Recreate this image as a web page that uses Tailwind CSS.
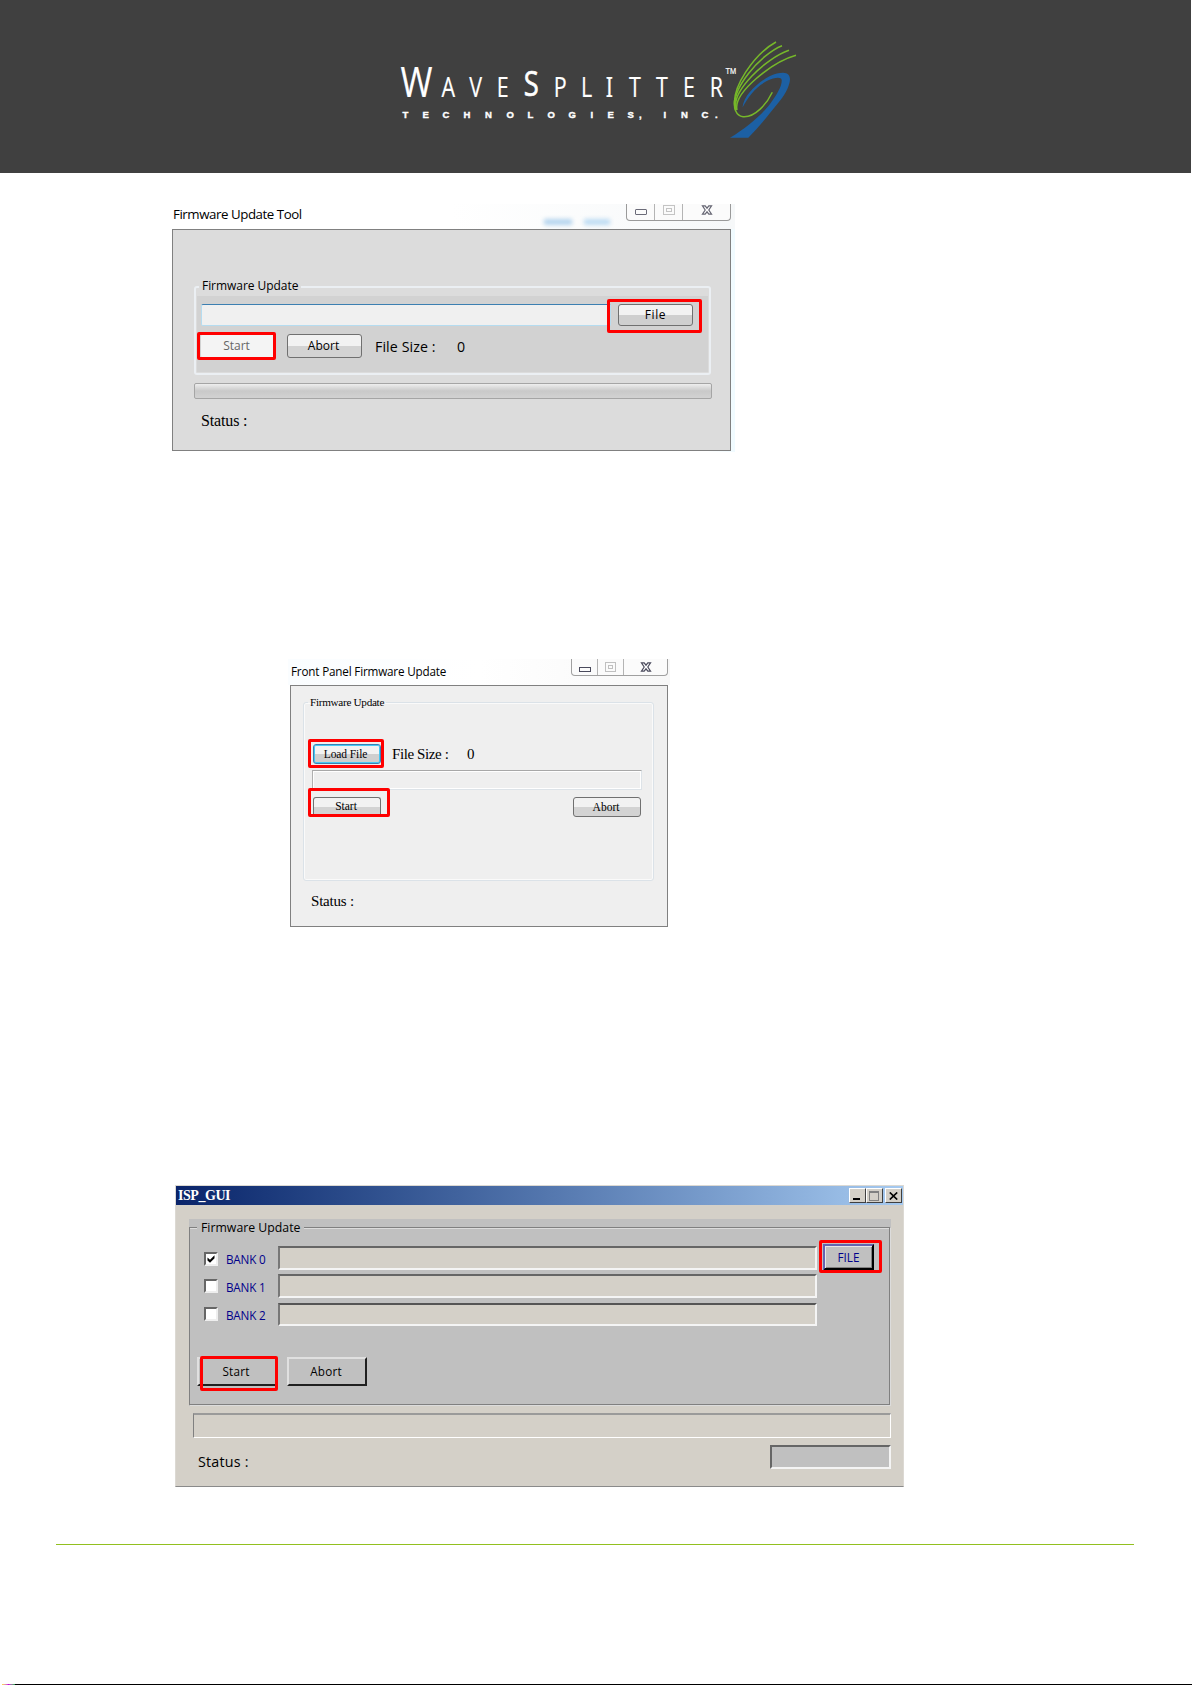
<!DOCTYPE html>
<html lang="en">
  <head>
    <meta charset="utf-8" />
    <title>WaveSplitter Technologies - Firmware Update</title>
    <script src="https://cdn.jsdelivr.net/npm/@tailwindcss/browser@4"></script>
  </head>
  <body class="flex h-[1685px] w-[1192px] flex-col overflow-hidden bg-white font-['Open_Sans','Noto_Sans',sans-serif] text-black">
    <header class="h-[173px] w-[1191px] shrink-0 bg-[#404040] pl-[390px] pt-[30px]">
      <svg class="block" width="420" height="140" viewBox="0 0 420 140" role="img" aria-label="WaveSplitter Technologies, Inc.">
        <g fill="#fff" stroke="#fff" stroke-width=".2" font-family="Open Sans, Noto Sans, sans-serif" transform="scale(.78 1)">
          <text x="13.500" y="67" font-size="42" textLength="41" lengthAdjust="spacingAndGlyphs">W</text>
          <text x="66 101.5 137" y="67" font-size="27.5">AVE</text>
          <text x="171.5" y="66.500" font-size="35" stroke-width=".7">S</text>
          <text x="210 245" y="67" font-size="27.5">PL</text>
          <text x="276.500" y="67" font-size="27.5" font-family="Noto Sans, sans-serif">I</text>
          <text x="306.5 341 375.5 410" y="67" font-size="27.5">TTER</text>
          <text x="430" y="44" font-size="9.5" font-family="Liberation Sans, sans-serif">TM</text>
        </g>
        <text
          x="12.5 32.5 52.5 73.5 95 116.5 137.5 157.5 178.5 200.5 217.5 237.5 249 273.5 291 311.5 325"
          y="87.5" fill="#fff" stroke="#fff" stroke-width=".4" font-size="9.5" font-weight="700"
          font-family="Liberation Sans, sans-serif">TECHNOLOGIES,INC.</text>
        <path fill="#1c60a4" d="M340 107.700h18.300C366 100 373 92 380 83c9-11 16-19 18.500-27 3-8 1.500-13-5.500-13.300-4 0-8 1-13 3.300-13 7-26 19-27.500 31.500C359 65 369 53 383 48.500c5-1.500 8.500-1 8.700 1.500.5 6-5 15-11.700 24-6 8-22 23-40 33.700z" />
        <g fill="none" stroke="#76b82a" stroke-width="1.500">
          <path d="M386 12C366 23 339 58 345.500 80" />
          <path d="M392 15.700C371 24 339 60 346 80" />
          <path d="M399 20.300C376 28 340 62 346.500 80" />
          <path d="M406 25.300C382 32 343 63 347 80" />
          <path d="M345 68c-2 10 1 18 8 18.700 12 1 24-13 29.300-24.400" />
        </g>
      </svg>
    </header>

    <main class="flex flex-col">
      <!-- Firmware Update Tool -->
      <section class="ml-[168px] mt-[31px] h-[248px] w-[567px] bg-gradient-to-r from-white from-95% to-[#f0fbff]">
        <div class="relative flex h-[25px] justify-between bg-gradient-to-r from-white via-white to-[#f6f8f9] pl-[5px] pr-1">
          <h2 class="text-[13.3px] leading-[21px] tracking-[-0.45px]">Firmware Update Tool</h2>
          <div class="absolute left-[376px] top-[15px] flex gap-3 blur-[2px]" aria-hidden="true">
            <span class="h-[6px] w-[28px] bg-[#b4d4ee]"></span><span class="h-[6px] w-[26px] bg-[#bddcf3]"></span>
          </div>
          <div class="flex h-[17px] w-[105px] rounded-b border border-t-0 border-[#9a9a9a] bg-[#fbfbfb]">
            <div class="flex w-[28px] items-center justify-center border-r border-[#b4b4b4]"><i class="h-[6px] w-[12px] rounded-[1px] border-[1.5px] border-[#6b6b78]"></i></div>
            <div class="flex w-[28px] items-start justify-center border-r border-[#b4b4b4] pt-px"><i class="flex h-[10px] w-[12px] items-center justify-center border border-[#c4c4c4]"><i class="h-[4px] w-[6px] border border-[#c4c4c4]"></i></i></div>
            <div class="flex flex-1 items-start justify-center pt-px">
              <svg width="12" height="10" viewBox="0 0 12 11"><path d="M1 1h3l2 2.500L8 1h3L8 5.500 11 10H8L6 7.500 4 10H1l3-4.500z" fill="#fff" stroke="#666673" stroke-width="1.300" /></svg>
            </div>
          </div>
        </div>
        <div class="ml-1 flex h-[222px] w-[559px] flex-col border border-[#808080] bg-[#dcdcdc] pl-[21px]">
          <fieldset class="mt-[49px] h-[96px] w-[517px] rounded-[3px] border-2 border-[#ebeff3] px-px">
            <legend class="ml-[2px] h-[15px] px-[3px] text-[12px] leading-[14px] tracking-[-0.050px]">Firmware Update</legend>
            <div class="mt-[2px] flex h-[76px] flex-col bg-[#d2d2d2] pl-[4px] pt-[8px]">
              <div class="flex h-[23px]">
                <div class="h-[22px] w-[410px] rounded-[2px] border border-[#b5dcf0] border-t-[#3c7fb1] bg-[#f0f0f0]"></div>
                <div class="relative ml-[6px]">
                  <button class="ml-px block h-[22px] w-[75px] rounded-[3px] border border-[#707070] bg-gradient-to-b from-[#f2f2f2] from-50% to-[#cfcfcf] to-50% pb-px text-[12px] leading-[20px] tracking-[0.6px]">File</button>
                  <span class="absolute -left-[10px] -top-[5px] h-[34px] w-[95px] rounded-[2px] border-3 border-[#f00]"></span>
                </div>
              </div>
              <div class="mt-[7px] flex h-[24px] items-start">
                <div class="relative">
                  <button class="block h-[24px] w-[73px] rounded-[3px] bg-[#f4f4f4] pr-[2px] text-[12px] leading-[20px] text-[#666]">Start</button>
                  <span class="absolute -left-[4px] -top-[2px] h-[28px] w-[79px] rounded-[2px] border-3 border-[#f00]"></span>
                </div>
                <button class="ml-[13px] h-[24px] w-[75px] rounded-[3px] border border-[#707070] bg-gradient-to-b from-[#f2f2f2] from-50% to-[#d3d3d3] to-50% pr-[2px] text-[12px] leading-[20px]">Abort</button>
                <span class="ml-[13px] w-[82px] text-[14.200px] leading-[26px] tracking-[0.100px]">File Size :</span>
                <span class="text-[14.200px] leading-[26px]">0</span>
              </div>
            </div>
          </fieldset>
          <div class="mt-[8px] h-[16px] w-[518px] rounded-[2px] border border-[#a5a5a5] bg-gradient-to-b from-[#eee] via-[#c9c9c9] to-[#d2d2d2]"></div>
          <p class="ml-[7px] mt-[10px] font-['Liberation_Serif',serif] text-[16px] leading-[24px] tracking-[-0.150px]">Status :</p>
        </div>
      </section>

      <!-- Front Panel Firmware Update -->
      <section class="ml-[288px] mt-[207px] h-[269px] w-[382px]">
        <div class="flex h-[26px] justify-between bg-gradient-to-r from-[#fafdff] via-white to-[#f8f8f8] pl-[3px] pr-[2px]">
          <h2 class="pt-[3px] text-[11.700px] leading-[18px] tracking-[-0.180px]">Front Panel Firmware Update</h2>
          <div class="flex h-[17px] w-[97px] rounded-b border border-t-0 border-[#a0a0a0] bg-[#fbfbfb]">
            <div class="flex w-[26px] items-center justify-center border-r border-[#b4b4b4]"><i class="mt-[4px] h-[5px] w-[12px] border border-[#4a4a5c]"></i></div>
            <div class="flex w-[26px] items-center justify-center border-r border-[#b4b4b4]"><i class="flex h-[10px] w-[11px] items-center justify-center border border-[#c0c0c0]"><i class="h-[4px] w-[5px] border border-[#c0c0c0]"></i></i></div>
            <div class="flex flex-1 items-start justify-center pt-[3px]">
              <svg width="12" height="10" viewBox="0 0 12 11"><path d="M1 1h3l2 2.500L8 1h3L8 5.500 11 10H8L6 7.500 4 10H1l3-4.500z" fill="#fff" stroke="#4a4a5c" stroke-width="1.300" /></svg>
            </div>
          </div>
        </div>
        <div class="ml-[2px] flex h-[242px] w-[378px] flex-col border border-[#808080] bg-[#efefef] px-[12px] font-['Liberation_Serif',serif]">
          <fieldset class="mt-[9px] h-[186px] w-[351px] rounded-[3px] border border-[#dbe2e8] pl-[8px] shadow-[inset_0_0_0_1px_#fafafa]">
            <legend class="-ml-[4px] h-[15px] px-[2px] text-[11.200px] leading-[15px] tracking-[-0.300px]">Firmware Update</legend>
            <div class="mt-[34px] flex h-[21px] items-start">
              <div class="relative">
                <button class="ml-px block h-[20px] w-[68px] rounded-[3px] border border-[#3c7fb1] bg-gradient-to-b from-[#f2f2f2] from-50% to-[#cfcfcf] to-50% pr-[3px] text-[11.500px] leading-[16px] tracking-[-0.100px] shadow-[inset_0_0_0_1px_#48c8f4]">Load File</button>
                <span class="absolute -left-[4px] -top-[5px] h-[29px] w-[76px] rounded-[2px] border-3 border-[#f00]"></span>
              </div>
              <span class="ml-[11px] w-[75px] text-[15px] leading-[21px] tracking-[-0.400px]">File Size :</span>
              <span class="text-[15px] leading-[21px]">0</span>
            </div>
            <div class="mt-[5px] h-[20px] w-[330px] border border-[#dde3e8] border-l-[#b0b0b0] border-t-[#a8a8a8] bg-[#efefef] shadow-[inset_0_0_0_1px_#fff]"></div>
            <div class="mt-[7px] flex justify-between pl-px pr-[12px]">
              <div class="relative">
                <button class="block h-[18px] w-[68px] rounded-t-[3px] border border-b-0 border-[#707070] bg-gradient-to-b from-[#f2f2f2] from-50% to-[#d3d3d3] to-50% pr-[2px] text-[11.500px] leading-[17px]">Start</button>
                <span class="absolute -left-[5px] -top-[9px] h-[29px] w-[82px] rounded-[2px] border-3 border-[#f00]"></span>
              </div>
              <button class="h-[20px] w-[68px] rounded-[3px] border border-[#707070] bg-gradient-to-b from-[#f2f2f2] from-50% to-[#d3d3d3] to-50% pb-px pr-[2px] text-[11.500px] leading-[16px]">Abort</button>
            </div>
          </fieldset>
          <p class="ml-[8px] mt-[8px] text-[15px] leading-[24px] tracking-[-0.200px]">Status :</p>
        </div>
      </section>

      <!-- ISP_GUI -->
      <section class="ml-[175px] mt-[257px] flex h-[302px] w-[729px] flex-col border border-[#dcd9d3] border-b-[#8a8a8a] bg-[#d4d0c8]">
        <div class="flex h-[19px] items-center justify-between bg-gradient-to-r from-[#0a246a] to-[#a6caf0] pl-[2px] pr-px">
          <h2 class="font-['Liberation_Serif',serif] text-[14px] font-bold leading-[18px] tracking-[-0.450px] text-white">ISP_GUI</h2>
          <div class="flex">
            <span class="flex h-[15px] w-[17px] items-end justify-center border border-[#404040] border-l-white border-t-white bg-[#d4d0c8] pb-[2px] pr-[2px]"><i class="h-[2px] w-[7px] bg-black"></i></span>
            <span class="mr-[2px] flex h-[15px] w-[17px] items-center justify-center border border-[#404040] border-l-white border-t-white bg-[#d4d0c8] pr-[2px]"><i class="h-[10px] w-[10px] border border-t-2 border-[#808080]"></i></span>
            <span class="flex h-[15px] w-[17px] items-center justify-center border border-[#404040] border-l-white border-t-white bg-[#d4d0c8]">
              <svg width="9" height="8" viewBox="0 0 9 8"><path d="M.8.500l7.400 7M8.200.500l-7.400 7" stroke="#000" stroke-width="1.700" /></svg>
            </span>
          </div>
        </div>
        <div class="ml-[13px] mt-[14px] h-[187px] w-[702px] bg-[#c0c0c0]">
          <fieldset class="h-[186px] w-[701px] border border-[#808080] pl-[14px] shadow-[1px_1px_0_#dcdcdc,inset_0_1px_0_#dcdcdc]">
            <legend class="-ml-[7px] h-[16px] bg-[#c0c0c0] px-[4px] text-[12.300px] leading-[17px]">Firmware Update</legend>
            <div class="mt-[11px] flex h-[26px] items-start">
              <span class="mt-[6px] h-[14px] w-[14px] border-2 border-[#eee] border-l-[#666] border-t-[#666] bg-white">
                <svg class="block" width="10" height="10" viewBox="0 0 10 10"><path d="M1.500 3.500v3L4 8.800l4.500-4.500v-3L4 5.800z" fill="#000" /></svg>
              </span>
              <span class="ml-[8px] w-[52px] text-[11.700px] leading-[26px] tracking-[-0.2px] text-[#00008b]">BANK 0</span>
              <div class="h-[24px] w-[539px] border-2 border-[#f4f4f4] border-l-[#777] border-t-[#666] bg-[#d4d0c8]"></div>
              <div class="relative ml-[6px] -mt-[2px]">
                <button class="block h-[27px] w-[51px] border-2 border-b-3 border-black border-l-[#6464b0] border-t-[#6464b0] bg-[#c0c0c0] text-[11.700px] leading-[20px] text-[#00008b] shadow-[inset_1px_1px_0_#e8e8e8,inset_-1px_-1px_0_#808080]">FILE</button>
                <span class="absolute -left-[4px] -top-[4px] h-[33px] w-[63px] rounded-[2px] border-3 border-[#f00]"></span>
              </div>
            </div>
            <div class="mt-[2px] flex h-[26px] items-start">
              <span class="mt-[5px] h-[14px] w-[14px] border-2 border-[#eee] border-l-[#666] border-t-[#666] bg-white"></span>
              <span class="ml-[8px] w-[52px] text-[11.700px] leading-[26px] tracking-[-0.2px] text-[#00008b]">BANK 1</span>
              <div class="h-[24px] w-[539px] border-2 border-[#f4f4f4] border-l-[#777] border-t-[#666] bg-[#d4d0c8]"></div>
            </div>
            <div class="mt-[2px] flex h-[26px] items-start">
              <span class="mt-[5px] h-[14px] w-[14px] border-2 border-[#eee] border-l-[#666] border-t-[#666] bg-white"></span>
              <span class="ml-[8px] w-[52px] text-[11.700px] leading-[26px] tracking-[-0.2px] text-[#00008b]">BANK 2</span>
              <div class="mt-px h-[23px] w-[539px] border-2 border-[#f4f4f4] border-l-[#777] border-t-[#555] bg-[#d4d0c8]"></div>
            </div>
            <div class="-ml-[7px] mt-[29px] flex gap-[10px]">
              <div class="relative">
                <button class="block h-[29px] w-[80px] border-2 border-[#202020] border-l-[#e0e0e0] border-t-[#e0e0e0] bg-[#c0c0c0] pr-[2px] text-[11.700px] leading-[25px] tracking-[0.200px]">Start</button>
                <span class="absolute -top-px left-[3px] h-[35px] w-[78px] rounded-[2px] border-3 border-[#f00]"></span>
              </div>
              <button class="h-[29px] w-[80px] border-2 border-[#202020] border-l-[#e0e0e0] border-t-[#e0e0e0] bg-[#c0c0c0] pr-[2px] text-[11.700px] leading-[25px] tracking-[0.200px]">Abort</button>
            </div>
          </fieldset>
        </div>
        <div class="ml-[17px] mt-[7px] h-[25px] w-[698px] border border-[#fff] border-l-[#808080] border-t-2 border-t-[#9a9a9a]"></div>
        <div class="ml-[22px] mt-[7px] flex justify-between pr-[12px]">
          <p class="mt-[5px] text-[14.300px] leading-[24px] tracking-[0.200px]">Status :</p>
          <div class="h-[24px] w-[121px] border-2 border-[#f4f4f4] border-l-[#666] border-t-[#666] bg-[#c0c0c0]"></div>
        </div>
      </section>
    </main>

    <footer class="mt-[57px] flex flex-1 flex-col justify-between">
      <hr class="ml-[56px] w-[1078px] border-t border-[#92c01f]" />
      <div class="flex h-px bg-black"><i class="w-[2px] bg-white"></i><i class="w-[13px] bg-gradient-to-r from-yellow-300 via-fuchsia-600 to-green-600"></i></div>
    </footer>
  </body>
</html>
